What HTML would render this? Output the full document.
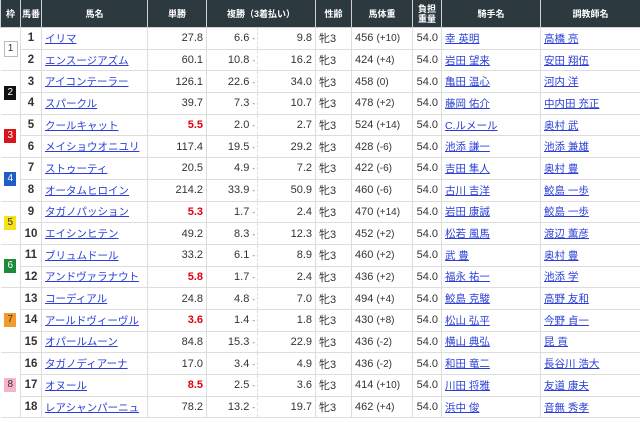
<!DOCTYPE html>
<html><head><meta charset="utf-8"><style>
body{margin:0;background:#fff;font-family:"Liberation Sans","Noto Sans CJK JP",sans-serif;}
table{border-collapse:collapse;table-layout:fixed;width:640px;font-size:11px;color:#333;}
th{background:#2c3a40;color:#fff;font-size:9px;font-weight:bold;height:27px;border:1px solid #d0d0d0;border-top:none;padding:0;line-height:10px}
td{height:20.7px;border:1px solid #ddd;padding:0 3px;white-space:nowrap;overflow:hidden}
td.w{text-align:center;border-left:none}
td.n{text-align:center;font-weight:bold;font-size:11.5px}
td.r{text-align:right}
a{color:#2a3fd8;text-decoration:underline;font-size:10.5px}
.red{color:#e00010;font-weight:bold}
.dsh{border-right:1px dashed #ddd;padding-right:2px}
.dl{border-left:none;text-align:right;padding-right:3px}
.d{font-size:8px;color:#666;margin-left:3px}
.wk{display:inline-block;width:12px;height:14px;line-height:14px;font-size:10px;text-align:center}
.small{font-size:10px}
</style></head><body>
<table>
<colgroup><col style="width:20px"><col style="width:21px"><col style="width:106px"><col style="width:59px"><col style="width:51px"><col style="width:58px"><col style="width:36px"><col style="width:61px"><col style="width:29px"><col style="width:99px"><col style="width:100px"></colgroup>
<tr><th>枠</th><th>馬番</th><th>馬名</th><th>単勝</th><th colspan="2">複勝（3着払い）</th><th>性齢</th><th>馬体重</th><th>負担<br>重量</th><th>騎手名</th><th>調教師名</th></tr>
<tr><td class="w" rowspan="2"><span class="wk" style="border:1px solid #bbb;background:#fff;color:#333">1</span></td><td class="n">1</td><td><a>イリマ</a></td><td class="r">27.8</td><td class="r dsh">6.6<span class="d">-</span></td><td class="r dl">9.8</td><td>牝3</td><td>456 <span class="small">(+10)</span></td><td class="r">54.0</td><td><a>幸 英明</a></td><td><a>高橋 亮</a></td></tr>
<tr><td class="n">2</td><td><a>エンスージアズム</a></td><td class="r">60.1</td><td class="r dsh">10.8<span class="d">-</span></td><td class="r dl">16.2</td><td>牝3</td><td>424 <span class="small">(+4)</span></td><td class="r">54.0</td><td><a>岩田 望来</a></td><td><a>安田 翔伍</a></td></tr>
<tr><td class="w" rowspan="2"><span class="wk" style="background:#111;color:#fff">2</span></td><td class="n">3</td><td><a>アイコンテーラー</a></td><td class="r">126.1</td><td class="r dsh">22.6<span class="d">-</span></td><td class="r dl">34.0</td><td>牝3</td><td>458 <span class="small">(0)</span></td><td class="r">54.0</td><td><a>亀田 温心</a></td><td><a>河内 洋</a></td></tr>
<tr><td class="n">4</td><td><a>スパークル</a></td><td class="r">39.7</td><td class="r dsh">7.3<span class="d">-</span></td><td class="r dl">10.7</td><td>牝3</td><td>478 <span class="small">(+2)</span></td><td class="r">54.0</td><td><a>藤岡 佑介</a></td><td><a>中内田 充正</a></td></tr>
<tr><td class="w" rowspan="2"><span class="wk" style="background:#d8141c;color:#fff">3</span></td><td class="n">5</td><td><a>クールキャット</a></td><td class="r red">5.5</td><td class="r dsh">2.0<span class="d">-</span></td><td class="r dl">2.7</td><td>牝3</td><td>524 <span class="small">(+14)</span></td><td class="r">54.0</td><td><a>C.ルメール</a></td><td><a>奥村 武</a></td></tr>
<tr><td class="n">6</td><td><a>メイショウオニユリ</a></td><td class="r">117.4</td><td class="r dsh">19.5<span class="d">-</span></td><td class="r dl">29.2</td><td>牝3</td><td>428 <span class="small">(-6)</span></td><td class="r">54.0</td><td><a>池添 謙一</a></td><td><a>池添 兼雄</a></td></tr>
<tr><td class="w" rowspan="2"><span class="wk" style="background:#1f5fc4;color:#fff">4</span></td><td class="n">7</td><td><a>ストゥーティ</a></td><td class="r">20.5</td><td class="r dsh">4.9<span class="d">-</span></td><td class="r dl">7.2</td><td>牝3</td><td>422 <span class="small">(-6)</span></td><td class="r">54.0</td><td><a>吉田 隼人</a></td><td><a>奥村 豊</a></td></tr>
<tr><td class="n">8</td><td><a>オータムヒロイン</a></td><td class="r">214.2</td><td class="r dsh">33.9<span class="d">-</span></td><td class="r dl">50.9</td><td>牝3</td><td>460 <span class="small">(-6)</span></td><td class="r">54.0</td><td><a>古川 吉洋</a></td><td><a>鮫島 一歩</a></td></tr>
<tr><td class="w" rowspan="2"><span class="wk" style="background:#f7e21a;color:#333">5</span></td><td class="n">9</td><td><a>タガノパッション</a></td><td class="r red">5.3</td><td class="r dsh">1.7<span class="d">-</span></td><td class="r dl">2.4</td><td>牝3</td><td>470 <span class="small">(+14)</span></td><td class="r">54.0</td><td><a>岩田 康誠</a></td><td><a>鮫島 一歩</a></td></tr>
<tr><td class="n">10</td><td><a>エイシンヒテン</a></td><td class="r">49.2</td><td class="r dsh">8.3<span class="d">-</span></td><td class="r dl">12.3</td><td>牝3</td><td>452 <span class="small">(+2)</span></td><td class="r">54.0</td><td><a>松若 風馬</a></td><td><a>渡辺 薫彦</a></td></tr>
<tr><td class="w" rowspan="2"><span class="wk" style="background:#1c8a3a;color:#fff">6</span></td><td class="n">11</td><td><a>ブリュムドール</a></td><td class="r">33.2</td><td class="r dsh">6.1<span class="d">-</span></td><td class="r dl">8.9</td><td>牝3</td><td>460 <span class="small">(+2)</span></td><td class="r">54.0</td><td><a>武 豊</a></td><td><a>奥村 豊</a></td></tr>
<tr><td class="n">12</td><td><a>アンドヴァラナウト</a></td><td class="r red">5.8</td><td class="r dsh">1.7<span class="d">-</span></td><td class="r dl">2.4</td><td>牝3</td><td>436 <span class="small">(+2)</span></td><td class="r">54.0</td><td><a>福永 祐一</a></td><td><a>池添 学</a></td></tr>
<tr><td class="w" rowspan="3"><span class="wk" style="background:#f39a2e;color:#333">7</span></td><td class="n">13</td><td><a>コーディアル</a></td><td class="r">24.8</td><td class="r dsh">4.8<span class="d">-</span></td><td class="r dl">7.0</td><td>牝3</td><td>494 <span class="small">(+4)</span></td><td class="r">54.0</td><td><a>鮫島 克駿</a></td><td><a>高野 友和</a></td></tr>
<tr><td class="n">14</td><td><a>アールドヴィーヴル</a></td><td class="r red">3.6</td><td class="r dsh">1.4<span class="d">-</span></td><td class="r dl">1.8</td><td>牝3</td><td>430 <span class="small">(+8)</span></td><td class="r">54.0</td><td><a>松山 弘平</a></td><td><a>今野 貞一</a></td></tr>
<tr><td class="n">15</td><td><a>オパールムーン</a></td><td class="r">84.8</td><td class="r dsh">15.3<span class="d">-</span></td><td class="r dl">22.9</td><td>牝3</td><td>436 <span class="small">(-2)</span></td><td class="r">54.0</td><td><a>横山 典弘</a></td><td><a>昆 貢</a></td></tr>
<tr><td class="w" rowspan="3"><span class="wk" style="background:#f7b4c8;color:#333">8</span></td><td class="n">16</td><td><a>タガノディアーナ</a></td><td class="r">17.0</td><td class="r dsh">3.4<span class="d">-</span></td><td class="r dl">4.9</td><td>牝3</td><td>436 <span class="small">(-2)</span></td><td class="r">54.0</td><td><a>和田 竜二</a></td><td><a>長谷川 浩大</a></td></tr>
<tr><td class="n">17</td><td><a>オヌール</a></td><td class="r red">8.5</td><td class="r dsh">2.5<span class="d">-</span></td><td class="r dl">3.6</td><td>牝3</td><td>414 <span class="small">(+10)</span></td><td class="r">54.0</td><td><a>川田 将雅</a></td><td><a>友道 康夫</a></td></tr>
<tr><td class="n">18</td><td><a>レアシャンパーニュ</a></td><td class="r">78.2</td><td class="r dsh">13.2<span class="d">-</span></td><td class="r dl">19.7</td><td>牝3</td><td>462 <span class="small">(+4)</span></td><td class="r">54.0</td><td><a>浜中 俊</a></td><td><a>音無 秀孝</a></td></tr>
</table>
</body></html>
